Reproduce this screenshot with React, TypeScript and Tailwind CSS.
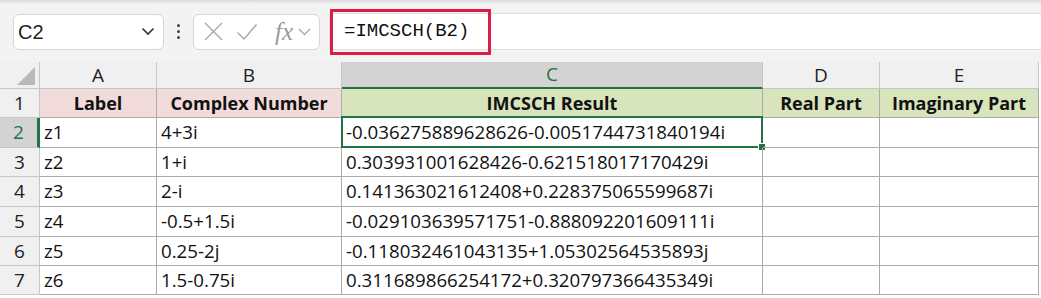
import React from "react";

const cols = [40, 117, 185, 421, 117, 159];
const rowHeights = [29, 30, 29, 30, 30, 29, 29];

const data: string[][] = [
  ["z1", "4+3i", "-0.036275889628626-0.0051744731840194i"],
  ["z2", "1+i", "0.303931001628426-0.621518017170429i"],
  ["z3", "2-i", "0.141363021612408+0.228375065599687i"],
  ["z4", "-0.5+1.5i", "-0.029103639571751-0.888092201609111i"],
  ["z5", "0.25-2j", "-0.118032461043135+1.05302564535893j"],
  ["z6", "1.5-0.75i", "0.311689866254172+0.320797366435349i"],
];

const font = { fontFamily: "'Open Sans', 'Liberation Sans', sans-serif" };

function NameBox() {
  return (
    <div className="ml-[13px] flex h-[36px] w-[151px] items-center justify-between rounded-md border border-[#d6d6d6] bg-white pl-[4px] pr-[8px]">
      <span className="text-[20px] text-[#1f1f1f]" style={{ fontFamily: "'Liberation Sans', sans-serif" }}>
        C2
      </span>
      <svg width="14" height="9" viewBox="0 0 14 9" fill="none">
        <path d="M1.5 1.5 L7 7 L12.5 1.5" stroke="#333" strokeWidth="1.6" />
      </svg>
    </div>
  );
}

function FormulaButtons() {
  return (
    <div className="flex h-[36px] w-[127px] items-center rounded-md border border-[#d6d6d6] bg-white pl-[9px]">
      <svg width="21" height="21" viewBox="0 0 21 21" fill="none">
        <path d="M2 2 L19 19 M19 2 L2 19" stroke="#a8a8a8" strokeWidth="1.4" />
      </svg>
      <svg className="ml-[12px]" width="22" height="18" viewBox="0 0 22 18" fill="none">
        <path d="M1.5 9.5 L8 16 L20.5 1.5" stroke="#a8a8a8" strokeWidth="1.4" />
      </svg>
      <span
        className="ml-[17px] text-[25px] italic leading-none text-[#9a9a9a]"
        style={{ fontFamily: "'Liberation Serif', serif" }}
      >
        fx
      </span>
      <svg className="ml-[5px]" width="13" height="8" viewBox="0 0 13 8" fill="none">
        <path d="M1 1 L6.5 6.5 L12 1" stroke="#a8a8a8" strokeWidth="1.4" />
      </svg>
    </div>
  );
}

function Toolbar() {
  return (
    <div className="relative h-[62px] w-full bg-[#f3f3f3]">
      <div className="h-[4px] w-full bg-gradient-to-b from-[#d9d9d9] to-[#f3f3f3]" />
      <div className="mt-[9px] flex items-center">
        <NameBox />
        <div className="mx-[13px] flex flex-col gap-[3px]">
          <div className="h-[3px] w-[3px] rounded-full bg-[#444]" />
          <div className="h-[3px] w-[3px] rounded-full bg-[#444]" />
          <div className="h-[3px] w-[3px] rounded-full bg-[#444]" />
        </div>
        <FormulaButtons />
        <div className="ml-[9px] flex h-[37px] flex-1 items-center border-y border-l border-[#e0e0e0] bg-white">
          <div className="relative flex h-[46px] w-[161px] items-center border-[3px] border-[#dc1d48] pl-[11px]">
            <span className="text-[19px] text-[#111]" style={{ fontFamily: "'Liberation Mono', monospace" }}>
              =IMCSCH(B2)
            </span>
          </div>
        </div>
      </div>
    </div>
  );
}

export default function App() {
  const letters = ["A", "B", "C", "D", "E"];
  const headers = ["Label", "Complex Number", "IMCSCH Result", "Real Part", "Imaginary Part"];
  const headerBg = ["bg-[#f2dcdb]", "bg-[#f2dcdb]", "bg-[#d8e4bc]", "bg-[#d8e4bc]", "bg-[#d8e4bc]"];

  return (
    <div className="h-[298px] w-[1041px] overflow-hidden bg-white" style={font}>
      <Toolbar />
      <div
        className="grid"
        style={{
          gridTemplateColumns: cols.map((c) => `${c}px`).join(" "),
          gridTemplateRows: `27px ${rowHeights.map((h) => `${h}px`).join(" ")}`,
        }}
      >
        {/* column header row */}
        <div className="relative border-r border-b border-[#c6c6c6] bg-[#f0f0f0]">
          <svg className="absolute right-[4px] bottom-[3px]" width="18" height="18" viewBox="0 0 18 18">
            <path d="M18 0 L18 18 L0 18 Z" fill="#b9b9b9" />
          </svg>
        </div>
        {letters.map((l) => (
          <div
            key={l}
            className={
              l === "C"
                ? "flex items-center justify-center border-r border-b-2 border-r-[#c6c6c6] border-b-[#217346] bg-[#d3d3d3] text-[19px] text-[#217346]"
                : "flex items-center justify-center border-r border-b border-[#c6c6c6] bg-[#f0f0f0] text-[19px] text-[#222]"
            }
          >
            {l}
          </div>
        ))}

        {/* row 1 */}
        <div className="flex items-center justify-center border-r border-b border-[#c6c6c6] bg-[#f0f0f0] text-[19px] text-[#222]">
          1
        </div>
        {headers.map((h, i) => (
          <div
            key={h}
            className={`flex items-center justify-center border-r border-b border-[#ababab] ${headerBg[i]} text-[18px] font-bold text-[#111]`}
          >
            {h}
          </div>
        ))}

        {/* data rows */}
        {data.map((row, r) => (
          <React.Fragment key={r}>
            <div
              className={
                r === 0
                  ? "flex items-center justify-center border-r-[3px] border-b border-r-[#217346] border-b-[#c6c6c6] bg-[#d3d3d3] text-[19px] text-[#217346]"
                  : "flex items-center justify-center border-r border-b border-[#c6c6c6] bg-[#f0f0f0] text-[19px] text-[#222]"
              }
            >
              {r + 2}
            </div>
            {[0, 1, 2, 3, 4].map((c) => (
              <div
                key={c}
                className="relative flex items-center overflow-visible border-r border-b border-[#ababab] pl-[4px] text-[18.7px] whitespace-nowrap text-[#111]"
              >
                {row[c] ?? ""}
                {r === 0 && c === 2 && (
                  <div className="absolute -top-[2px] -left-[1px] -right-[1px] -bottom-[1px] border-2 border-[#217346]">
                    <div className="absolute -right-[5px] -bottom-[5px] h-[8px] w-[8px] border border-white bg-[#217346]" />
                  </div>
                )}
              </div>
            ))}
          </React.Fragment>
        ))}
      </div>
    </div>
  );
}
